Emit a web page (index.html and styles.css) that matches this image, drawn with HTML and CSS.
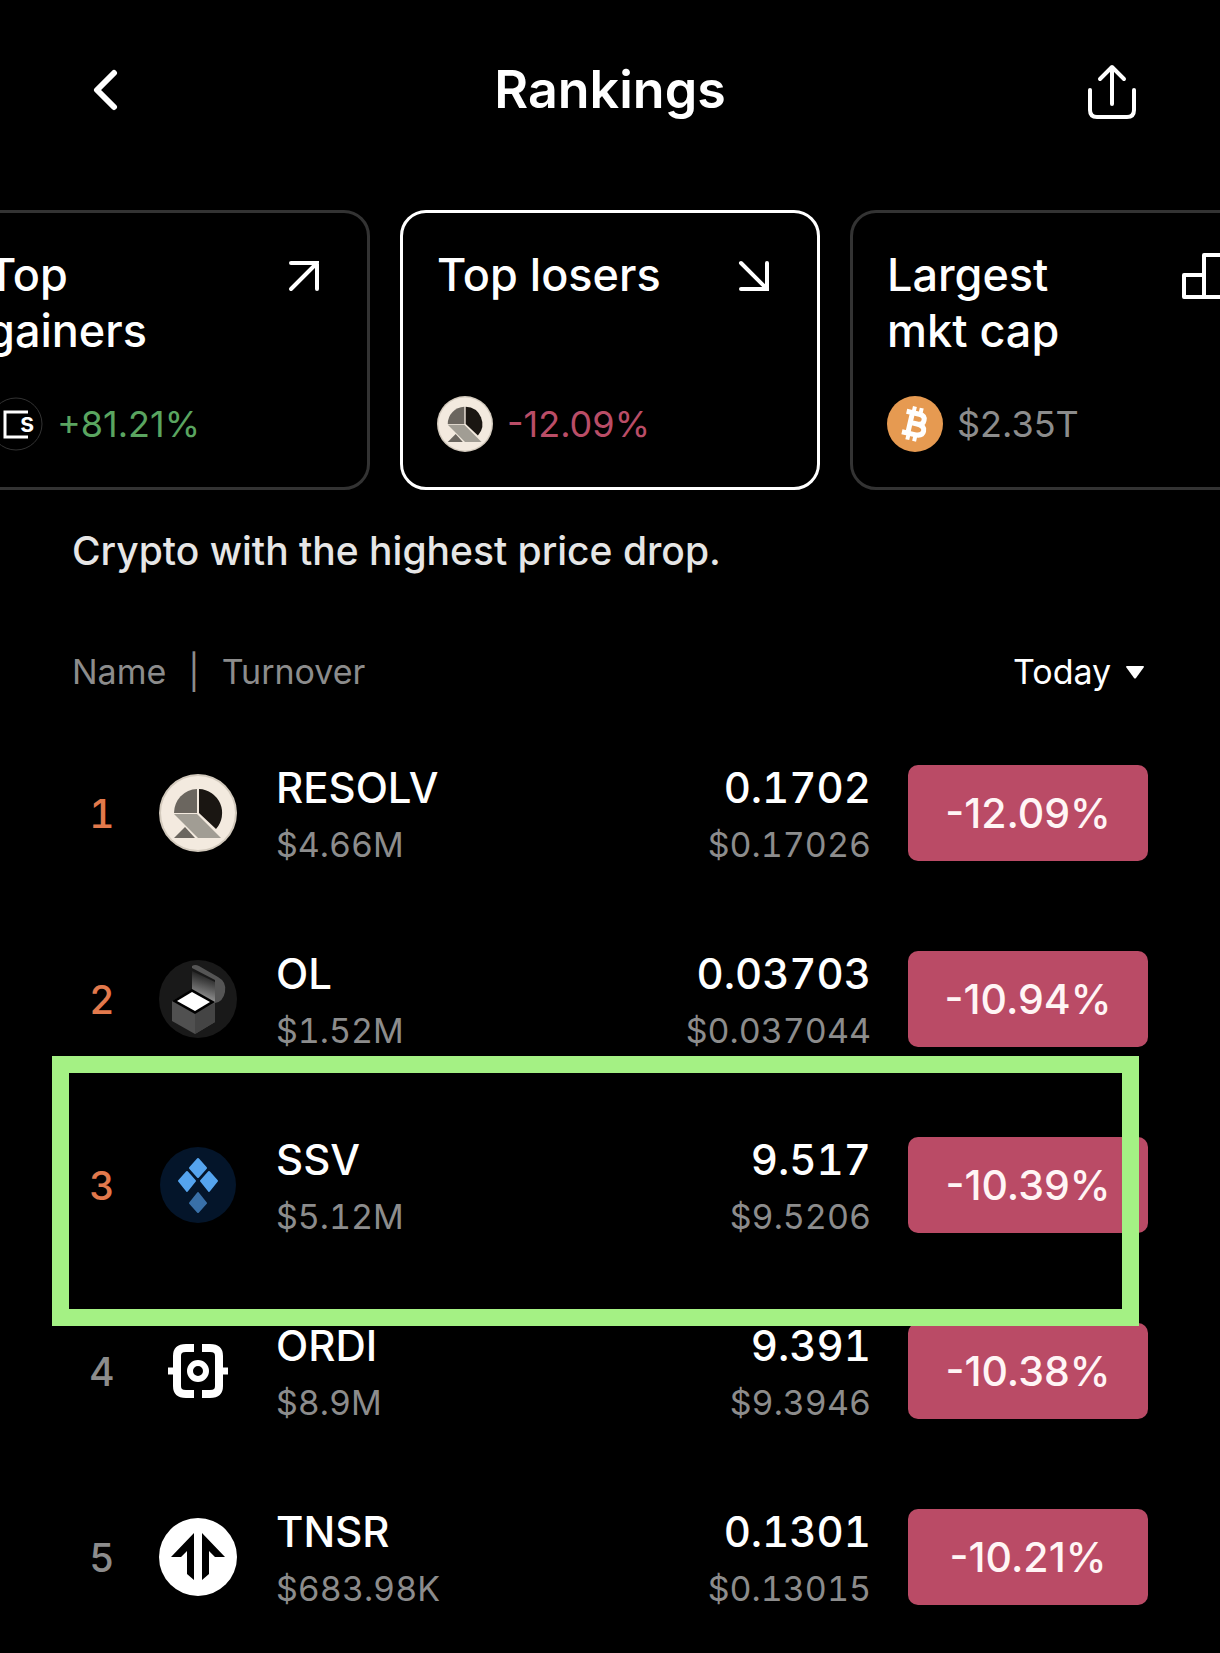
FILE: index.html
```html
<!DOCTYPE html>
<html lang="en">
<head>
<meta charset="utf-8">
<meta name="viewport" content="width=device-width, initial-scale=1">
<title>Rankings</title>
<link rel="stylesheet" href="styles.css">
</head>
<body>
<svg class="defs" aria-hidden="true">
  <symbol id="resolv" viewBox="0 0 78 78">
    <circle cx="39" cy="39" r="39" fill="#d3cabd"/>
    <circle cx="39" cy="39" r="37" fill="#f3eadf"/>
    <path d="M38 15A24 24 0 0 0 15 39H38Z" fill="#6b665f"/>
    <path d="M40 15A24 24 0 0 1 57 55L40 39Z" fill="#1a1612"/>
    <path d="M15 40H38L62 64H39Z" fill="#a19d94"/>
    <path d="M26 53L36 64H15Z" fill="#6b665f"/>
  </symbol>
</svg>

<header class="topbar">
  <button class="icon-button back" type="button" aria-label="Back">
    <svg width="26" height="42" viewBox="0 0 26 42" fill="none" stroke="#fff" stroke-width="6" stroke-linecap="round" stroke-linejoin="round"><path d="M21 4L4 21L21 38"/></svg>
  </button>
  <h1 class="title">Rankings</h1>
  <button class="icon-button" type="button" aria-label="Share">
    <svg width="50" height="60" viewBox="0 -4 50 60" fill="none" stroke="#fff" stroke-width="4" stroke-linecap="round" stroke-linejoin="round"><path d="M3 26V46Q3 53 10 53H40Q47 53 47 46V26M25 40V4M13 15L25 3L37 15"/></svg>
  </button>
</header>

<main>
  <nav class="cards" aria-label="Ranking type">
    <a class="card" href="#gainers">
      <span class="card-head">
        <span class="card-title">Top gainers</span>
        <svg class="card-icon" width="50" height="50" viewBox="0 0 50 50" fill="none" stroke="#fff" stroke-width="4" stroke-linecap="round"><path d="M12 12H38V38M38 12L12 38"/></svg>
      </span>
      <span class="card-foot up">
        <svg width="56" height="56" viewBox="0 0 56 56"><circle cx="29" cy="28" r="26" fill="#000" stroke="#333" stroke-width="1"/><path d="M41 16H18V41H41" fill="none" stroke="#fff" stroke-width="3"/><text class="logo-letter" x="33" y="36">s</text></svg>
        +81.21%
      </span>
    </a>
    <a class="card active" href="#losers" aria-current="page">
      <span class="card-head">
        <span class="card-title">Top losers</span>
        <svg class="card-icon" width="50" height="50" viewBox="0 0 50 50" fill="none" stroke="#fff" stroke-width="4" stroke-linecap="round"><path d="M12 12L38 38M38 12V38H12"/></svg>
      </span>
      <span class="card-foot down"><svg width="56" height="56"><use href="#resolv"/></svg>-12.09%</span>
    </a>
    <a class="card" href="#market-cap">
      <span class="card-head">
        <span class="card-title">Largest mkt cap</span>
        <svg class="card-icon" width="50" height="50" viewBox="0 0 50 50" fill="none" stroke="#fff" stroke-width="4" stroke-linejoin="round"><path d="M25 46V4H43V46M25 24H5V46H61V31H43"/></svg>
      </span>
      <span class="card-foot">
        <svg width="56" height="56" viewBox="0 0 56 56"><circle cx="28" cy="28" r="28" fill="#e69a51"/><g transform="rotate(13 28 28)" fill="none" stroke="#fff"><path stroke-width="5" d="M17 17.500H30Q36 17.500 36 22.500T30 27.500H23M30 27.500Q38 27.500 38 33T30 38.500H17M23 17V39"/><path stroke-width="4" d="M24 11V17M31 11V17M24 39V45M31 39V45"/></g></svg>
        $2.35T
      </span>
    </a>
  </nav>

  <p class="summary">Crypto with the highest price drop.</p>

  <table class="ranks">
    <thead>
      <tr>
        <th class="columns" colspan="3" scope="col"><span>Name</span><span class="bar">|</span><span>Turnover</span></th>
        <th class="period" colspan="2" scope="col">
          <label class="period-label">
            <select class="period-select" aria-label="Period"><option>Today</option></select>
            <svg width="18" height="13" viewBox="0 0 18 13"><path d="M1 0H17Q18 0 18 1L10 12Q9 13 8 12L0 1Q0 0 1 0Z" fill="#fff"/></svg>
          </label>
        </th>
      </tr>
    </thead>
    <tbody>
      <tr>
        <td class="rank hot">1</td>
        <td class="coin"><svg width="78" height="78"><use href="#resolv"/></svg></td>
        <td class="name"><strong>RESOLV</strong><small>$4.66M</small></td>
        <td class="price"><strong>0.1702</strong><small>$0.17026</small></td>
        <td class="change"><span class="badge">-12.09%</span></td>
      </tr>
      <tr>
        <td class="rank hot">2</td>
        <td class="coin">
          <svg width="78" height="78" viewBox="0 0 78 78">
            <defs><linearGradient id="lid" x1=".5" y1=".1" x2=".3" y2="1"><stop offset="0" stop-color="#222"/><stop offset="1" stop-color="#aaa"/></linearGradient></defs>
            <circle cx="39" cy="39" r="39" fill="#191919"/>
            <path d="M33 6Q36 4 40 6L59 17Q68 22 66 32Q64 42 56 43V20L33 8Z" fill="#555"/>
            <path d="M33 11L56 22V43L33 32Z" fill="url(#lid)"/>
            <path d="M13 41L33 30L56 43V62L36 74L13 61Z" fill="#505050"/>
            <path d="M36 53L56 43V62L36 74Z" fill="#444"/>
            <path d="M13 41L33 29L56 42L36 54Z" fill="#000"/>
            <path d="M18 41L33 32L51 42L36 51Z" fill="#fff"/>
          </svg>
        </td>
        <td class="name"><strong>OL</strong><small>$1.52M</small></td>
        <td class="price"><strong>0.03703</strong><small>$0.037044</small></td>
        <td class="change"><span class="badge">-10.94%</span></td>
      </tr>
      <tr class="marked">
        <td class="rank hot">3</td>
        <td class="coin">
          <svg width="78" height="78" viewBox="0 0 78 78">
            <circle cx="39" cy="39" r="38" fill="#04152a"/>
            <g fill="#55a4ee" stroke="#55a4ee" stroke-width="2" stroke-linejoin="round"><path d="M39 13L47 22L39 31L31 22Z"/><path d="M28 26L36 35L28 45L20 35Z"/><path d="M50 26L58 35L50 45L42 35Z"/></g>
            <path d="M39 47L47 57L39 66L31 57Z" fill="#3970a8" stroke="#3970a8" stroke-width="2" stroke-linejoin="round"/>
          </svg>
        </td>
        <td class="name"><strong>SSV</strong><small>$5.12M</small></td>
        <td class="price"><strong>9.517</strong><small>$9.5206</small></td>
        <td class="change"><span class="badge">-10.39%</span></td>
      </tr>
      <tr>
        <td class="rank">4</td>
        <td class="coin">
          <svg width="78" height="78" viewBox="0 0 78 78" fill="none" stroke="#fff">
            <path stroke-width="8" d="M35 16H27Q18 16 18 24V54Q18 62 27 62H35M43 16H51Q60 16 60 24V54Q60 62 51 62H43"/>
            <path stroke-width="7" d="M9 39H20M58 39H69"/>
            <circle cx="39" cy="39" r="8" stroke-width="6"/>
          </svg>
        </td>
        <td class="name"><strong>ORDI</strong><small>$8.9M</small></td>
        <td class="price"><strong>9.391</strong><small>$9.3946</small></td>
        <td class="change"><span class="badge">-10.38%</span></td>
      </tr>
      <tr>
        <td class="rank">5</td>
        <td class="coin">
          <svg width="78" height="78" viewBox="0 0 78 78">
            <circle cx="39" cy="39" r="39" fill="#fff"/>
            <path d="M35 15V62L28 56V33L22 39H12ZM43 15V62L50 56V33L56 39H66Z" fill="#000"/>
          </svg>
        </td>
        <td class="name"><strong>TNSR</strong><small>$683.98K</small></td>
        <td class="price"><strong>0.1301</strong><small>$0.13015</small></td>
        <td class="change"><span class="badge">-10.21%</span></td>
      </tr>
    </tbody>
  </table>
</main>
</body>
</html>
```
FILE: styles.css
```css
* { box-sizing: border-box; }

body {
  margin: 0;
  background: #000;
  color: #fff;
  font-family: Inter, "Liberation Sans", sans-serif;
  overflow-x: hidden;
}

svg { display: block; flex: none; }
.defs { position: absolute; width: 0; height: 0; }

.topbar {
  display: flex;
  align-items: center;
  justify-content: space-between;
  height: 180px;
  padding: 0 83px;
}

.icon-button {
  padding: 0;
  border: 0;
  background: none;
  width: 50px;
  cursor: pointer;
}
.icon-button.back { padding-left: 10px; }

.title {
  margin: 0;
  font-size: 52px;
  line-height: 64px;
  font-weight: 600;
}

.cards {
  display: flex;
  justify-content: center;
  gap: 30px;
  margin-top: 30px;
}

.card {
  display: flex;
  flex: none;
  flex-direction: column;
  justify-content: space-between;
  width: 420px;
  height: 280px;
  padding: 34px 34px 35px;
  border: 3px solid #333;
  border-radius: 26px;
  color: inherit;
  text-decoration: none;
}
.card.active { border-color: #fff; }

.card-head { display: flex; justify-content: space-between; }
.card-title {
  max-width: 230px;
  font-size: 45px;
  line-height: 56px;
  font-weight: 500;
}
.card-icon { margin: 4px 4px 0 0; overflow: visible; }

.card-foot {
  display: flex;
  align-items: center;
  gap: 14px;
  color: #8c8c8c;
  font-size: 36px;
  line-height: 54px;
}
.card-foot.up { color: #5aa560; }
.card-foot.down { color: #ba4d67; }
.logo-letter { fill: #fff; font-size: 26px; font-weight: 600; }

.summary {
  margin: 36px 72px 0;
  color: #e6e6e6;
  font-size: 39px;
  line-height: 50px;
  font-weight: 500;
}

.ranks {
  width: calc(100% - 144px);
  margin: 48px 72px 0;
  border-collapse: collapse;
  font-variant-numeric: tabular-nums;
}
.ranks th, .ranks td { padding: 0; }
.ranks thead tr { height: 96px; }
.ranks tbody tr { height: 186px; }

.columns {
  color: #8c8c8c;
  font-size: 34px;
  line-height: 50px;
  font-weight: 400;
  text-align: left;
}
.bar { margin: 0 22px; }

.period-label {
  display: flex;
  align-items: center;
  justify-content: flex-end;
  gap: 14px;
  padding-right: 4px;
}
.period-select {
  appearance: none;
  padding: 0;
  border: 0;
  background: none;
  color: #fff;
  font: 400 34px/50px Inter, "Liberation Sans", sans-serif;
}

.rank {
  width: 60px;
  color: #8c8c8c;
  font-size: 39px;
  font-weight: 500;
  text-align: center;
}
.rank.hot { color: #e2794c; }

.coin { width: 144px; }
.ranks .coin { padding-left: 27px; }

.name strong, .price strong {
  display: block;
  font-size: 42px;
  line-height: 64px;
  font-weight: 500;
}
.name small, .price small {
  display: block;
  color: #8c8c8c;
  font-size: 34px;
  line-height: 50px;
}
.price { text-align: right; }
.ranks .price { padding-right: 37px; }

.change { width: 240px; }
.badge {
  display: block;
  border-radius: 10px;
  background: #ba4b66;
  color: #fff5f5;
  font-size: 41px;
  line-height: 96px;
  font-weight: 500;
  font-variant-numeric: normal;
  text-align: center;
}

/* Highlight frame drawn over the marked row and its neighbours */
.marked { position: relative; }
.marked::after {
  content: "";
  position: absolute;
  inset: -36px 9px -48px -20px;
  border: 17px solid #a4f184;
  pointer-events: none;
}
```
